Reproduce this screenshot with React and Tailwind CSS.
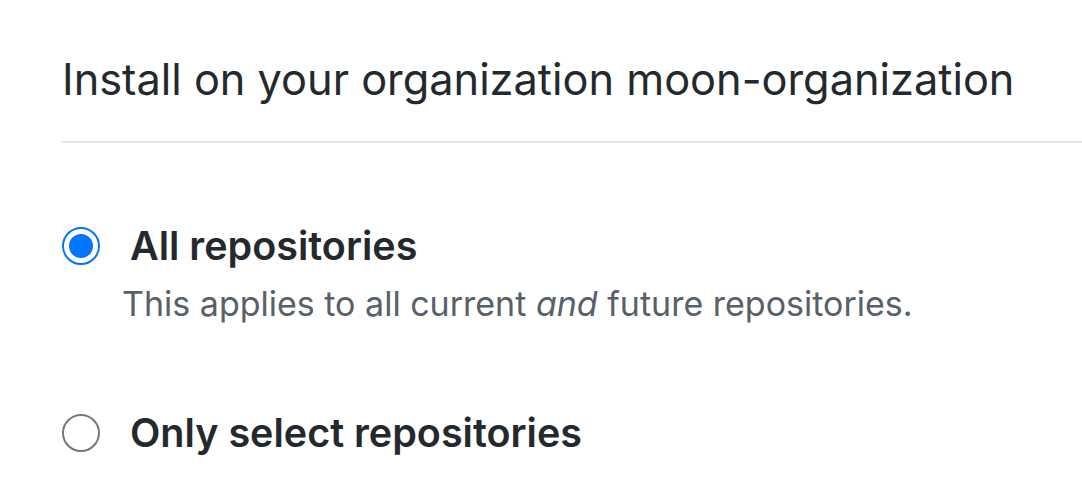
export default function App() {
  return (
    <div
      className="w-[1082px] h-[504px] overflow-hidden bg-white pl-[62px] text-[#24292e]"
      style={{ fontFamily: 'Inter, "Noto Sans", sans-serif' }}
    >
      <h2 className="pt-[53px] pb-[36px] text-[43.3px] leading-[52px] font-normal border-b-2 border-[#e1e4e8] whitespace-nowrap">
        Install on your organization moon-organization
      </h2>

      <div className="mt-[78px] flex items-center">
        <div className="w-[38px] h-[38px] rounded-full border-2 border-[#0075ff] flex items-center justify-center shrink-0">
          <div className="w-[24px] h-[24px] rounded-full bg-[#0075ff]" />
        </div>
        <span className="ml-[30px] text-[39.5px] leading-[50px] font-semibold">All repositories</span>
      </div>
      <p className="mt-[11px] ml-[60px] text-[34px] leading-[44px] text-[#586069] whitespace-nowrap">
        This applies to all current <em className="italic">and</em> future repositories.
      </p>

      <div className="mt-[82px] flex items-center">
        <div className="w-[38px] h-[38px] rounded-full border-2 border-[#767676] shrink-0" />
        <span className="ml-[30px] text-[39.5px] leading-[50px] font-semibold">Only select repositories</span>
      </div>
    </div>
  );
}
